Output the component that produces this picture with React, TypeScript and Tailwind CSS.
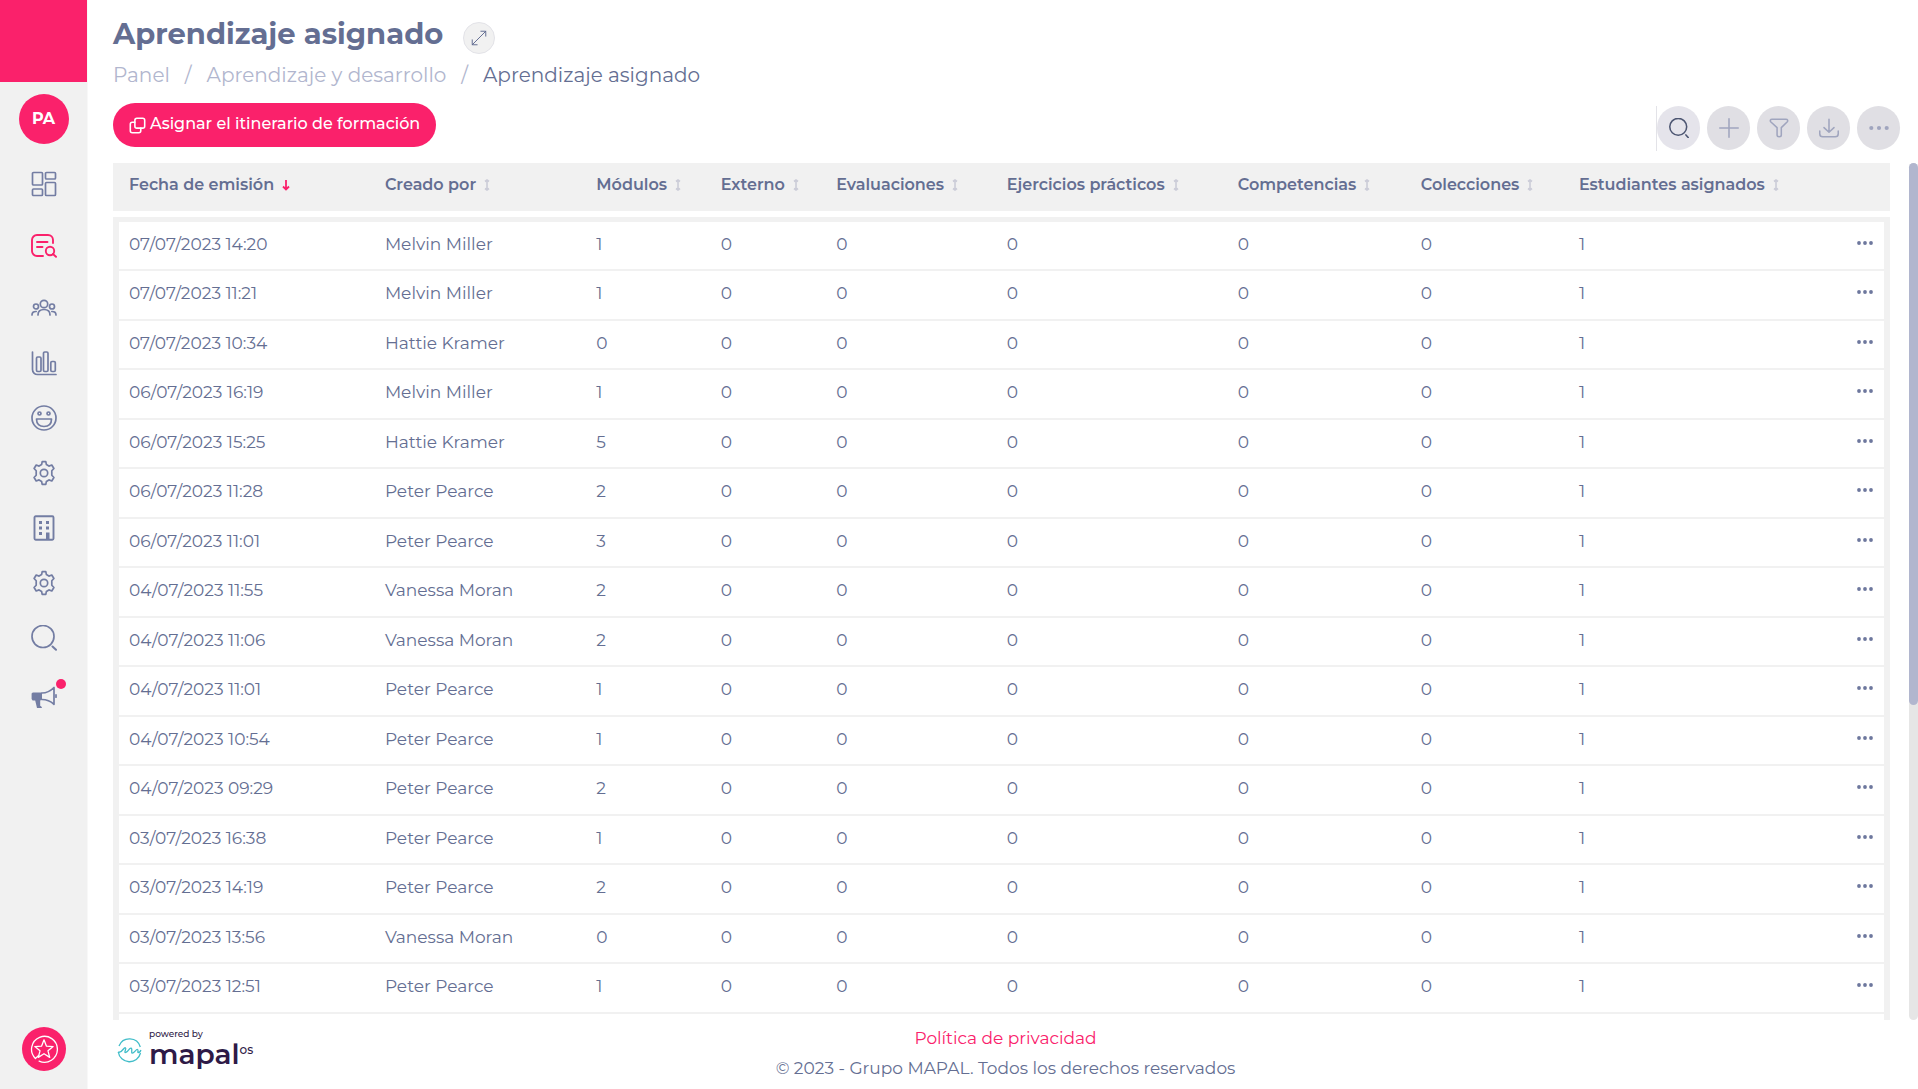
import type { ReactNode } from 'react';

interface Assignment {
    date: string;
    author: string;
    modules: number;
}

const assignments: Assignment[] = [
    { date: '07/07/2023 14:20', author: 'Melvin Miller', modules: 1 },
    { date: '07/07/2023 11:21', author: 'Melvin Miller', modules: 1 },
    { date: '07/07/2023 10:34', author: 'Hattie Kramer', modules: 0 },
    { date: '06/07/2023 16:19', author: 'Melvin Miller', modules: 1 },
    { date: '06/07/2023 15:25', author: 'Hattie Kramer', modules: 5 },
    { date: '06/07/2023 11:28', author: 'Peter Pearce', modules: 2 },
    { date: '06/07/2023 11:01', author: 'Peter Pearce', modules: 3 },
    { date: '04/07/2023 11:55', author: 'Vanessa Moran', modules: 2 },
    { date: '04/07/2023 11:06', author: 'Vanessa Moran', modules: 2 },
    { date: '04/07/2023 11:01', author: 'Peter Pearce', modules: 1 },
    { date: '04/07/2023 10:54', author: 'Peter Pearce', modules: 1 },
    { date: '04/07/2023 09:29', author: 'Peter Pearce', modules: 2 },
    { date: '03/07/2023 16:38', author: 'Peter Pearce', modules: 1 },
    { date: '03/07/2023 14:19', author: 'Peter Pearce', modules: 2 },
    { date: '03/07/2023 13:56', author: 'Vanessa Moran', modules: 0 },
    { date: '03/07/2023 12:51', author: 'Peter Pearce', modules: 1 },
];

const columns = [
    { label: 'Fecha de emisión', width: 'w-[14.4%]', sorted: true },
    { label: 'Creado por', width: 'w-[11.9%]' },
    { label: 'Módulos', width: 'w-[7%]' },
    { label: 'Externo', width: 'w-[6.5%]' },
    { label: 'Evaluaciones', width: 'w-[9.6%]' },
    { label: 'Ejercicios prácticos', width: 'w-[13%]' },
    { label: 'Competencias', width: 'w-[10.3%]' },
    { label: 'Colecciones', width: 'w-[8.9%]' },
    { label: 'Estudiantes asignados', width: 'w-[12.4%]' },
];

interface IconProps {
    size?: number;
    strokeWidth?: number;
    children: ReactNode;
}

function Icon({ size = 26, strokeWidth = 1.7, children }: IconProps) {
    return (
        <svg
            width={size}
            height={size}
            viewBox="0 0 26 26"
            fill="none"
            stroke="currentColor"
            strokeWidth={strokeWidth}
            strokeLinecap="round"
            strokeLinejoin="round"
            aria-hidden="true"
        >
            {children}
        </svg>
    );
}

const gear = (
    <Icon>
        <path d="M10.6 4.6 11.2 1.7h3.6l.6 2.9 2.5 1.5 2.9-1.1 2.1 3.5-2.1 2.3v4.4l2.1 2.3-2.1 3.5-2.9-1.1-2.5 1.5-.6 2.9h-3.6l-.6-2.9-2.5-1.5L5.200 21l-2.100-3.500 2.100-2.300v-4.400L3.100 8.500 5.200 5l2.900 1.100z" />
        <circle cx="13" cy="13" r="3.700" />
    </Icon>
);

const navItems = [
    {
        label: 'Panel',
        icon: (
            <Icon>
                <rect x="1.500" y="1.500" width="10" height="12.500" rx="1" />
                <rect x="14.500" y="1.500" width="10" height="6.500" rx="1" />
                <rect x="14.500" y="11.500" width="10" height="13" rx="1" />
                <rect x="1.500" y="18" width="10" height="6.500" rx="1" />
            </Icon>
        ),
    },
    {
        label: 'Aprendizaje y desarrollo',
        active: true,
        className: 'mt-1.5',
        icon: (
            <Icon strokeWidth={1.9}>
                <path d="M12 24H6a5 5 0 0 1-5-5V8a5 5 0 0 1 5-5h11a5 5 0 0 1 5 5v3M6 10h10.500M6 15h5.500" />
                <circle cx="19" cy="19" r="4.200" />
                <path d="m22 22 3 2.800" />
            </Icon>
        ),
    },
    {
        label: 'Usuarios',
        className: 'mt-2',
        icon: (
            <Icon>
                <circle cx="13" cy="9" r="3.700" />
                <circle cx="5" cy="11.500" r="2.500" />
                <circle cx="21" cy="11.500" r="2.500" />
                <path d="M7 20c0-4 2.400-5.500 6-5.500s6 1.500 6 5.500M1 20c0-2.500 1.500-3.600 4.200-3.500M25 20c0-2.500-1.500-3.600-4.200-3.500" />
            </Icon>
        ),
    },
    {
        label: 'Informes',
        icon: (
            <Icon>
                <path d="M1.500 2v17.500a5 5 0 0 0 5 5H25" />
                <rect x="5.500" y="7" width="4.500" height="14.500" rx="1.200" />
                <rect x="12.500" y="2" width="4.500" height="19.500" rx="1.200" />
                <rect x="19.800" y="11.500" width="4.500" height="10" rx="1.200" />
            </Icon>
        ),
    },
    {
        label: 'Satisfacción',
        icon: (
            <Icon>
                <circle cx="13" cy="13" r="12" />
                <circle cx="8.500" cy="8.500" r="1.500" />
                <circle cx="17.500" cy="8.500" r="1.500" />
                <path d="M5.500 14h15c0 5-3 7.500-7.500 7.500S5.500 19 5.500 14z" />
            </Icon>
        ),
    },
    { label: 'Ajustes', icon: gear },
    {
        label: 'Empresa',
        icon: (
            <Icon>
                <rect x="3.500" y="1.200" width="19" height="23.600" rx="1.200" strokeWidth="1.900" />
                <path
                    d="M8 6h3v3H8zM15 6h3v3h-3zM8 11.500h3v3H8zM15 11.500h3v3h-3zM8 17h3v3H8zM15 17.500h3.500V25H15z"
                    fill="currentColor"
                    stroke="none"
                />
            </Icon>
        ),
    },
    { label: 'Configuración', icon: gear },
    {
        label: 'Buscar',
        icon: (
            <Icon>
                <circle cx="12" cy="11.500" r="11" />
                <path d="m21.500 21.500 3.500 3.300" strokeWidth="2" />
            </Icon>
        ),
    },
    {
        label: 'Novedades',
        className: 'mt-1',
        badge: true,
        icon: (
            <Icon>
                <path d="M.6 9.500 1.800 8.400H11v7.400l-1.800.8v5.200l1.600 1.200v1H6L4.200 16.400H1.600L.6 15z" fill="currentColor" stroke="none" />
                <path d="M11 9c5 0 8.500-2 12-5.500v16.800c-3.500-3.200-7-4.800-12-4.800M25 10.800v2.400" />
            </Icon>
        ),
    },
];

const toolbar = [
    {
        label: 'Añadir',
        icon: <path d="M13 1v24M1 13h24" />,
    },
    {
        label: 'Filtrar',
        icon: <path d="M4 1.500h18c2.200 0 3 2 1.500 3.700L16 12.500V22c0 3-5.500 3-5.500 0v-9.500L2.500 5.200C1 3.500 1.800 1.500 4 1.500z" />,
    },
    {
        label: 'Descargar',
        icon: <path d="M13 1.500V18M6.500 12.500 13 18.500l6.500-6M1 17v3.500a4 4 0 0 0 4 4h16a4 4 0 0 0 4-4V17" />,
    },
    {
        label: 'Más opciones',
        icon: (
            <g fill="currentColor" stroke="none">
                <circle cx="3" cy="13" r="2.700" />
                <circle cx="13" cy="13" r="2.700" />
                <circle cx="23" cy="13" r="2.700" />
            </g>
        ),
    },
];

function SortIcon({ sorted }: { sorted?: boolean }) {
    if (sorted) {
        return (
            <svg width="8" height="12" viewBox="0 0 8 12" fill="none" stroke="#fa216b" strokeWidth="1.800" aria-hidden="true">
                <path d="M4 1v9.500M1 7.500l3 3 3-3" />
            </svg>
        );
    }
    return (
        <svg width="6" height="12" viewBox="0 0 6 12" fill="none" stroke="#cbccd8" strokeWidth="1.600" aria-hidden="true">
            <path d="M3 1v10M1 2.500 3 1l2 1.500M1 9.500 3 11l2-1.500" />
        </svg>
    );
}

function Sidebar() {
    return (
        <aside className="flex w-[88px] shrink-0 flex-col items-center border-r border-[#f8f8f8] bg-[#f1f1f1]">
            <div className="h-[82px] w-full shrink-0 bg-[#fa216b]" />
            <button className="mt-3 size-[50px] shrink-0 rounded-full bg-[#fa216b] text-base font-bold text-white">PA</button>
            <nav className="mt-3">
                <ul>
                    {navItems.map((item) => (
                        <li key={item.label} className={item.className}>
                            <a
                                href="#"
                                aria-label={item.label}
                                className={`relative flex h-[55px] w-[50px] items-center justify-center ${item.active ? 'text-[#fa216b]' : 'text-[#737da3]'}`}
                            >
                                {item.icon}
                                {item.badge && <span className="absolute top-2.5 right-[3px] size-2.5 rounded-full bg-[#fa216b]" />}
                            </a>
                        </li>
                    ))}
                </ul>
            </nav>
            <button
                aria-label="Favoritos"
                className="mt-auto mb-[18px] flex size-11 shrink-0 items-center justify-center rounded-full bg-[#fa216b] text-white"
            >
                <Icon size={28} strokeWidth={1.2}>
                    <path d="M5 21.800A12 12 0 1 1 8.500 24.200M5 21.800 8 19" />
                    <path d="m13 4.500 2.300 5.900 6.200.3-4.800 4 1.600 6.100-5.300-3.400-5.300 3.400 1.600-6.100-4.800-4 6.200-.3z" />
                </Icon>
            </button>
        </aside>
    );
}

function Footer() {
    return (
        <footer className="flex h-[69px] shrink-0 pr-5">
            <div className="flex w-[200px] gap-[7px] pt-2 pl-1 text-[#2e1a47]">
                <svg className="mt-2.5" width="25" height="25" viewBox="0 0 25 25" fill="none" stroke="#41bdc9" strokeWidth="1.300" aria-hidden="true">
                    <path d="M2 8a11.300 11.300 0 0 1 21.300 1M23.500 15A11.300 11.300 0 0 1 1.300 14" />
                    <path d="M1 14c2 1 4-1 5.500-3s2.800-1.500 2 .8-1 3.400.8 2.400c2-1 2.800-4 4.600-4s.2 4 1 4.800c1.800 1 4.200-4 5.600-3.500s-.5 3 .8 3c1.200 0 2.200-1 2.600-2.500" />
                </svg>
                <div>
                    <div className="text-[9px] leading-[12px] font-medium">powered by</div>
                    <div className="flex items-start">
                        <span className="text-[28px] leading-[28px] font-semibold">mapal</span>
                        <span className="pt-0.5 text-xs font-medium">os</span>
                    </div>
                </div>
            </div>
            <div className="flex-1 pt-[3px] pr-[200px] text-center text-[17px] leading-[30px]">
                <a href="#" className="block text-[#fa216b]">
                    Política de privacidad
                </a>
                <p>© 2023 - Grupo MAPAL. Todos los derechos reservados</p>
            </div>
        </footer>
    );
}

function AssignmentTable() {
    return (
        <div className="flex min-h-0 flex-1 flex-col overflow-hidden">
            <table className="w-full table-fixed border-separate border-spacing-0 text-left">
                <thead>
                    <tr className="h-[54px]">
                        {columns.map((column) => (
                            <th
                                key={column.label}
                                scope="col"
                                className={`border-b-[6px] border-white bg-[#f1f1f1] pb-1 pl-4 font-semibold whitespace-nowrap ${column.width}`}
                            >
                                <button className="flex items-center gap-2">
                                    {column.label}
                                    <SortIcon sorted={column.sorted} />
                                </button>
                            </th>
                        ))}
                        <th scope="col" aria-label="Acciones" className="border-b-[6px] border-white bg-[#f1f1f1]" />
                    </tr>
                </thead>
                <tbody className="text-[17px] [&_td]:border-b-2 [&_td]:border-[#f1f1f1] [&_td]:pb-0.5 [&_td]:pl-4 [&_tr:first-child_td]:border-t-[5px]">
                    {assignments.map((row, index) => (
                        <tr key={row.date} className={index === 0 ? 'h-[54px]' : 'h-[50px] odd:h-[49px]'}>
                            <td className="border-l-[6px] !pl-2.5">{row.date}</td>
                            <td>{row.author}</td>
                            <td>{row.modules}</td>
                            <td>0</td>
                            <td>0</td>
                            <td>0</td>
                            <td>0</td>
                            <td>0</td>
                            <td>1</td>
                            <td className="border-r-[6px] pr-2.5">
                                <button aria-label={`Opciones de ${row.date}`} className="mb-1 ml-auto block text-[#6d779d]">
                                    <svg width="18" height="6" viewBox="0 0 18 6" fill="currentColor" aria-hidden="true">
                                        <circle cx="3" cy="3" r="1.900" />
                                        <circle cx="9" cy="3" r="1.900" />
                                        <circle cx="15" cy="3" r="1.900" />
                                    </svg>
                                </button>
                            </td>
                        </tr>
                    ))}
                </tbody>
            </table>
            <div className="flex-1 border-x-[6px] border-[#f1f1f1]" />
        </div>
    );
}

export default function App() {
    return (
        <div className="flex h-screen overflow-hidden bg-white font-['Montserrat','Inter',sans-serif] text-base text-[#646e92]">
            <Sidebar />
            <main className="flex min-w-0 flex-1 flex-col pl-[25px]">
                <header className="pt-3.5">
                    <div className="flex h-10 items-start gap-5">
                        <h1 className="text-[29px] leading-[40px] font-bold">Aprendizaje asignado</h1>
                        <button
                            aria-label="Expandir"
                            className="mt-2 flex size-8 items-center justify-center rounded-full border border-[#e3e3e8] bg-[#f1f1f1]"
                        >
                            <Icon size={16} strokeWidth={1.6}>
                                <path d="M2 24 24 2M16 2h8v8M2 16v8h8" />
                            </Icon>
                        </button>
                    </div>
                    <nav aria-label="Ruta" className="flex h-[42px] items-center gap-[15px] text-xl text-[#b1b6ce]">
                        <a href="#">Panel</a>
                        <span>/</span>
                        <a href="#">Aprendizaje y desarrollo</a>
                        <span>/</span>
                        <span className="text-[#646e92]">Aprendizaje asignado</span>
                    </nav>
                </header>

                <div className="flex items-start justify-between pt-[7px] pr-[18px] pb-3">
                    <button className="flex h-11 items-center gap-1 rounded-full bg-[#fa216b] px-4 text-base font-medium text-white">
                        <Icon size={17} strokeWidth={2.4}>
                            <rect x="9" y="2" width="15" height="15" rx="3" />
                            <path d="M9 8H5a3 3 0 0 0-3 3v10a3 3 0 0 0 3 3h10a3 3 0 0 0 3-3v-4" />
                        </Icon>
                        <span className="pb-0.5">Asignar el itinerario de formación</span>
                    </button>
                    <div className="mt-[3px] flex h-[45px] gap-[7px] border-l border-[#e3e3e8]">
                        <button aria-label="Buscar" className="flex h-11 w-[43px] items-center justify-center rounded-full bg-[#e5e4eb] text-[#4d5672]">
                            <Icon size={20} strokeWidth={2}>
                                <circle cx="12" cy="11.500" r="11" />
                                <path d="m22 22 3 3.500" />
                            </Icon>
                        </button>
                        {toolbar.map((item) => (
                            <button
                                key={item.label}
                                aria-label={item.label}
                                className="flex h-11 w-[43px] items-center justify-center rounded-full bg-[#e0dfe4] text-[#a0a5be]"
                            >
                                <Icon size={20} strokeWidth={2}>
                                    {item.icon}
                                </Icon>
                            </button>
                        ))}
                    </div>
                </div>

                <div className="flex min-h-0 flex-1 gap-[19px]">
                    <AssignmentTable />
                    <div className="w-[9px] rounded-full bg-[#e6e6e6]">
                        <div className="h-[63.2%] rounded-full bg-[#b1b6ce]" />
                    </div>
                </div>

                <Footer />
            </main>
        </div>
    );
}
